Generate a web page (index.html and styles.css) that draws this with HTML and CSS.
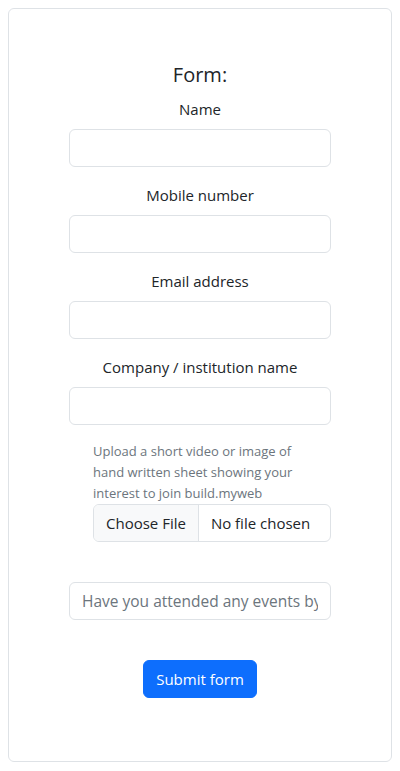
FILE: index.html
```html
<!DOCTYPE html>
<html lang="en">
<head>
<meta charset="utf-8">
<title>Form</title>
<link rel="stylesheet" href="styles.css">
</head>
<body>
<div class="card">
  <form class="form">
    <h5 class="title">Form:</h5>
    <div class="field">
      <label class="label" for="name">Name</label>
      <input class="control" id="name" type="text">
    </div>
    <div class="field">
      <label class="label" for="mobile">Mobile number</label>
      <input class="control" id="mobile" type="text">
    </div>
    <div class="field">
      <label class="label" for="email">Email address</label>
      <input class="control" id="email" type="text">
    </div>
    <div class="field">
      <label class="label" for="company">Company / institution name</label>
      <input class="control" id="company" type="text">
    </div>
    <div class="upload">
      <p class="upload-text">Upload a short video or image of hand written sheet showing your interest to join build.myweb</p>
      <div class="file">
        <span class="file-btn">Choose File</span>
        <span class="file-name">No file chosen</span>
      </div>
    </div>
    <input class="control events" type="text" placeholder="Have you attended any events by build.myweb?">
    <div class="actions">
      <button class="submit" type="button">Submit form</button>
    </div>
  </form>
</div>
</body>
</html>
```

FILE: styles.css
```css
* { box-sizing: border-box; }
body {
  margin: 8px;
  font-family: "Open Sans", "Noto Sans", sans-serif;
  color: #212529;
  background: #fff;
}
.card {
  border: 1px solid #dee2e6;
  border-radius: 6px;
  height: 754px;
  padding-top: 54px;
}
.form {
  width: 262px;
  margin: 0 auto;
  display: flex;
  flex-direction: column;
}
.title {
  margin: 0 0 10px;
  font-size: 20px;
  font-weight: 400;
  line-height: 24px;
  text-align: center;
}
.field {
  display: flex;
  flex-direction: column;
  margin-bottom: 16px;
}
.label {
  font-size: 15px;
  line-height: 24px;
  text-align: center;
  margin-bottom: 8px;
}
.control {
  display: block;
  width: 100%;
  height: 38px;
  border: 1px solid #dee2e6;
  border-radius: 6px;
  padding: 6px 12px;
  font-family: inherit;
  font-size: 15px;
  color: #212529;
  background: #fff;
  outline: none;
}
.control::placeholder { color: #6c757d; }
.upload {
  margin-left: 24px;
}
.upload-text {
  margin: 0;
  max-width: 212px;
  font-size: 13px;
  line-height: 21px;
  color: #6c757d;
}
.file {
  display: flex;
  height: 38px;
  border: 1px solid #dee2e6;
  border-radius: 6px;
  overflow: hidden;
  font-size: 15px;
  line-height: 24px;
}
.file-btn {
  background: #f8f9fa;
  border-right: 1px solid #dee2e6;
  padding: 6px 12px;
  color: #212529;
}
.file-name {
  padding: 6px 12px;
  color: #212529;
}
.events {
  margin-top: 40px;
  font-size: 15.5px;
}
.actions {
  display: flex;
  justify-content: center;
  margin-top: 40px;
}
.submit {
  height: 38px;
  padding: 6px 12px;
  border: 1px solid #0d6efd;
  border-radius: 6px;
  background: #0d6efd;
  color: #fff;
  font-family: inherit;
  font-size: 15px;
  line-height: 24px;
}
```
